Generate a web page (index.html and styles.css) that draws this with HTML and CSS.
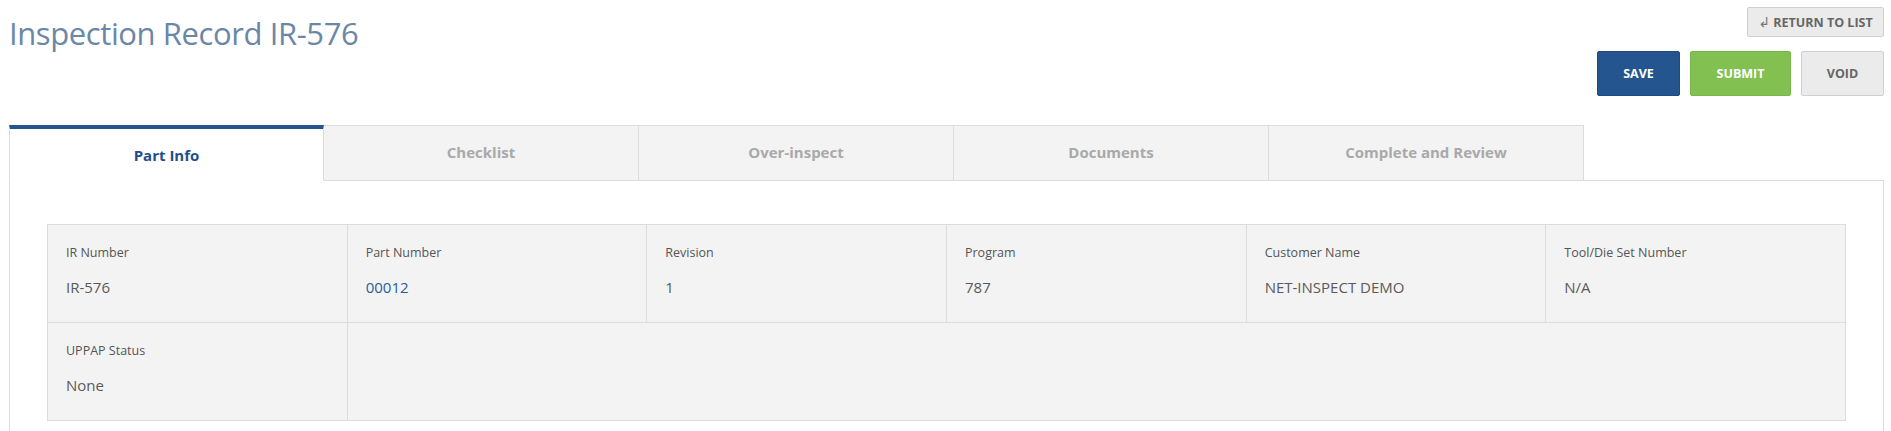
FILE: index.html
```html
<!DOCTYPE html>
<html lang="en">
<head>
  <meta charset="UTF-8" />
  <title>Inspection Record IR-576</title>
  <link rel="stylesheet" href="styles.css">
</head>
<body>
  <div class="page-header">
    <h1 class="title">Inspection Record IR-576</h1>
    <div class="actions">
      <button class="btn btn-return"><span class="return-icon">↲</span> RETURN TO LIST</button>
      <div class="btn-row">
        <button class="btn btn-save">SAVE</button>
        <button class="btn btn-submit">SUBMIT</button>
        <button class="btn btn-void">VOID</button>
      </div>
    </div>
  </div>

  <div class="tabs">
    <div class="tab active">Part Info</div>
    <div class="tab">Checklist</div>
    <div class="tab">Over-inspect</div>
    <div class="tab">Documents</div>
    <div class="tab">Complete and Review</div>
  </div>

  <div class="panel">
    <div class="info-grid">
      <div class="cell">
        <div class="label">IR Number</div>
        <div class="value">IR-576</div>
      </div>
      <div class="cell">
        <div class="label">Part Number</div>
        <div class="value link">00012</div>
      </div>
      <div class="cell">
        <div class="label">Revision</div>
        <div class="value">1</div>
      </div>
      <div class="cell">
        <div class="label">Program</div>
        <div class="value">787</div>
      </div>
      <div class="cell">
        <div class="label">Customer Name</div>
        <div class="value">NET-INSPECT DEMO</div>
      </div>
      <div class="cell">
        <div class="label">Tool/Die Set Number</div>
        <div class="value">N/A</div>
      </div>
      <div class="cell">
        <div class="label">UPPAP Status</div>
        <div class="value">None</div>
      </div>
      <div class="cell wide"></div>
    </div>
  </div>
</body>
</html>
```

FILE: styles.css
```css
body {
  margin: 0;
  padding: 0 7px 0 9px;
  font-family: 'Open Sans', 'Noto Sans', sans-serif;
  background: #fff;
  color: #555;
}
.page-header {
  display: flex;
  justify-content: space-between;
  align-items: flex-start;
}
.title {
  margin: 13px 0 0;
  font-size: 31px;
  line-height: 40px;
  font-weight: 400;
  letter-spacing: -0.4px;
  color: #6b87a8;
}
.actions {
  display: flex;
  flex-direction: column;
  align-items: flex-end;
  gap: 14px;
  margin-top: 7px;
}
.btn-row {
  display: flex;
  gap: 10px;
}
.btn {
  font-family: 'Open Sans', sans-serif;
  font-weight: 700;
  font-size: 12.5px;
  border: 1px solid transparent;
  border-radius: 2px;
  cursor: pointer;
  box-sizing: border-box;
  padding: 0;
}
.btn-return {
  width: 137px;
  height: 30px;
  background: #ebebeb;
  border-color: #cfcfcf;
  color: #666;
}
.return-icon {
  font-family: 'DejaVu Sans', sans-serif;
  font-weight: 400;
  font-size: 14px;
  color: #777;
}
.btn-save,
.btn-submit,
.btn-void {
  height: 45px;
}
.btn-save {
  width: 83px;
  background: #25558e;
  border-color: #1f4a7d;
  color: #fff;
}
.btn-submit {
  width: 101px;
  background: #82c151;
  border-color: #78b64a;
  color: #fff;
}
.btn-void {
  width: 83px;
  background: #ebebeb;
  border-color: #cfcfcf;
  color: #666;
}
.tabs {
  display: flex;
  margin-top: 29px;
  position: relative;
  z-index: 1;
}
.tab {
  width: 315px;
  height: 56px;
  box-sizing: border-box;
  display: flex;
  align-items: center;
  justify-content: center;
  padding-bottom: 2px;
  background: #f3f3f3;
  border: 1px solid #dcdcdc;
  border-left: none;
  font-size: 15px;
  font-weight: 700;
  color: #a9a9a9;
}
.tab.active {
  background: #fff;
  color: #1f4f8b;
  border-top: 4px solid #25558e;
  border-left: 1px solid #dcdcdc;
  border-bottom: 1px solid #fff;
  padding-bottom: 0;
}
.panel {
  border: 1px solid #dcdcdc;
  margin-top: -1px;
  padding: 43px 37px 40px;
}
.info-grid {
  display: grid;
  grid-template-columns: repeat(6, 1fr);
  border-top: 1px solid #dcdcdc;
  border-left: 1px solid #dcdcdc;
}
.cell {
  background: #f3f3f3;
  border-right: 1px solid #dcdcdc;
  border-bottom: 1px solid #dcdcdc;
  height: 98px;
  box-sizing: border-box;
  padding: 19px 18px 0;
}
.cell.wide {
  grid-column: span 5;
}
.label {
  font-size: 12.5px;
  line-height: 18px;
  color: #555;
}
.value {
  margin-top: 14px;
  font-size: 15px;
  line-height: 22px;
  color: #5a5a5a;
}
.value.link {
  color: #2a5c9a;
}
```
